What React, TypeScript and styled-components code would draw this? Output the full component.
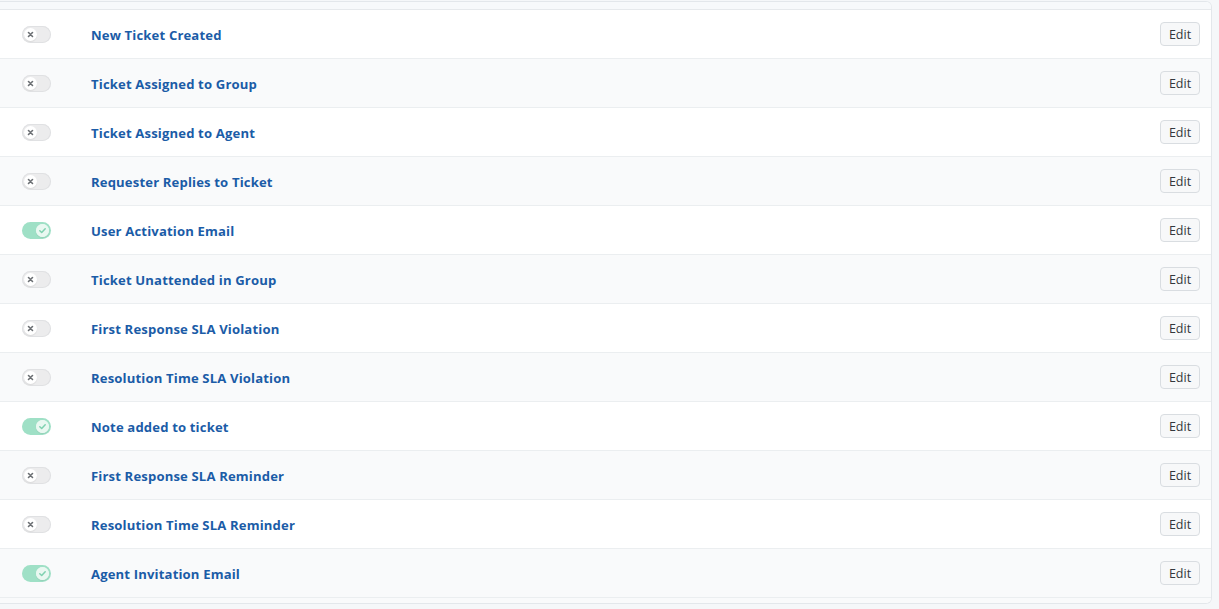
import React from "react";
import styled, { createGlobalStyle } from "styled-components";

const GlobalStyle = createGlobalStyle`
  html, body {
    margin: 0;
    padding: 0;
    background: #f5f7f9;
    font-family: "Open Sans", "Noto Sans", sans-serif;
  }
`;

const Page = styled.div`
  padding: 1px 7px 0 0;
  width: 1219px;
  box-sizing: border-box;
`;

const Card = styled.div`
  background: #ffffff;
  border: 1px solid #e3e7eb;
  border-left: none;
  border-radius: 0 6px 6px 0;
  overflow: hidden;
`;

const HeadStrip = styled.div`
  height: 7px;
  background: #f7f9fb;
  border-bottom: 1px solid #e6e9ec;
`;

const Row = styled.div<{ $shaded: boolean }>`
  display: flex;
  align-items: center;
  height: 48px;
  border-bottom: 1px solid #ebeef0;
  background: ${(p) => (p.$shaded ? "#f9fafb" : "#ffffff")};
  padding: 0 11px 0 22px;
`;

const Toggle = styled.span<{ $on: boolean }>`
  position: relative;
  display: inline-block;
  width: 29px;
  height: 17px;
  border-radius: 9px;
  background: ${(p) => (p.$on ? "#9fe0c6" : "#ececed")};
  box-shadow: ${(p) => (p.$on ? "none" : "inset 0 0 0 1px #e0e1e3")};
  flex: none;
`;

const Knob = styled.span<{ $on: boolean }>`
  position: absolute;
  top: 2px;
  left: ${(p) => (p.$on ? "14px" : "2px")};
  width: 13px;
  height: 13px;
  border-radius: 50%;
  background: ${(p) => (p.$on ? "#e9f8f1" : "#ffffff")};
  display: flex;
  align-items: center;
  justify-content: center;
  box-shadow: 0 1px 1px rgba(0, 0, 0, 0.08);
`;

const Title = styled.a`
  margin-left: 40px;
  padding-top: 2px;
  font-size: 13.1px;
  font-weight: 700;
  color: #1b5ca7;
  text-decoration: none;
  flex: 1;
  letter-spacing: 0.15px;
`;

const EditButton = styled.button`
  font-family: "Open Sans", "Noto Sans", sans-serif;
  font-size: 12.5px;
  color: #33383d;
  background: #f7f8f9;
  border: 1px solid #d9dde1;
  border-radius: 4px;
  height: 24px;
  width: 40px;
  padding: 0;
  cursor: pointer;
`;

const BottomStrip = styled.div`
  height: 5px;
  background: #f9fafb;
`;

const notifications: { name: string; on: boolean }[] = [
  { name: "New Ticket Created", on: false },
  { name: "Ticket Assigned to Group", on: false },
  { name: "Ticket Assigned to Agent", on: false },
  { name: "Requester Replies to Ticket", on: false },
  { name: "User Activation Email", on: true },
  { name: "Ticket Unattended in Group", on: false },
  { name: "First Response SLA Violation", on: false },
  { name: "Resolution Time SLA Violation", on: false },
  { name: "Note added to ticket", on: true },
  { name: "First Response SLA Reminder", on: false },
  { name: "Resolution Time SLA Reminder", on: false },
  { name: "Agent Invitation Email", on: true },
];

const CrossIcon = () => (
  <svg width="7" height="7" viewBox="0 0 7 7">
    <path d="M1.5 1.5 L5.5 5.5 M5.5 1.5 L1.5 5.5" stroke="#6b6f73" strokeWidth="1.6" strokeLinecap="round" />
  </svg>
);

const CheckIcon = () => (
  <svg width="13" height="13" viewBox="0 0 13 13">
    <circle cx="6.5" cy="6.5" r="6.5" fill="#e9f8f1" />
    <path d="M3.8 6.7 L5.7 8.5 L9.2 4.7" stroke="#7fd1b0" strokeWidth="1.5" fill="none" strokeLinecap="round" strokeLinejoin="round" />
  </svg>
);

export default function App() {
  return (
    <>
      <GlobalStyle />
      <Page>
        <Card>
          <HeadStrip />
          {notifications.map((n, i) => (
            <Row key={n.name} $shaded={i % 2 === 1}>
              <Toggle $on={n.on}>
                <Knob $on={n.on}>{n.on ? <CheckIcon /> : <CrossIcon />}</Knob>
              </Toggle>
              <Title href="#">{n.name}</Title>
              <EditButton>Edit</EditButton>
            </Row>
          ))}
          <BottomStrip />
        </Card>
      </Page>
    </>
  );
}
